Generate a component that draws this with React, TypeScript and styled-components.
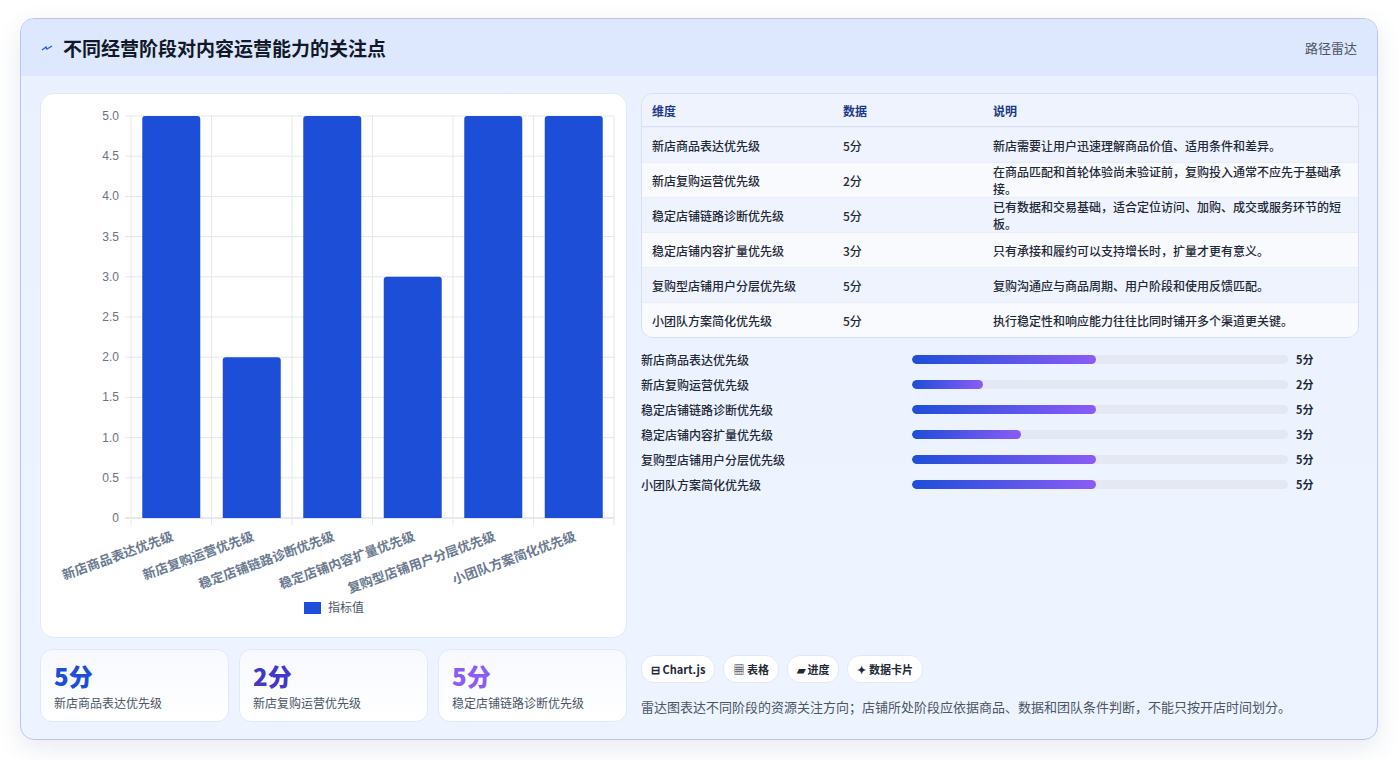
import React from 'react';
import styled, { createGlobalStyle } from 'styled-components';

const GlobalStyle = createGlobalStyle`
  body { margin: 0; background: #ffffff; font-family: "Noto Sans CJK SC", "Noto Sans", sans-serif; }
`;

const rows = [
    { name: '新店商品表达优先级', value: 5, note: '新店需要让用户迅速理解商品价值、适用条件和差异。' },
    { name: '新店复购运营优先级', value: 2, note: '在商品匹配和首轮体验尚未验证前，复购投入通常不应先于基础承接。' },
    { name: '稳定店铺链路诊断优先级', value: 5, note: '已有数据和交易基础，适合定位访问、加购、成交或服务环节的短板。' },
    { name: '稳定店铺内容扩量优先级', value: 3, note: '只有承接和履约可以支持增长时，扩量才更有意义。' },
    { name: '复购型店铺用户分层优先级', value: 5, note: '复购沟通应与商品周期、用户阶段和使用反馈匹配。' },
    { name: '小团队方案简化优先级', value: 5, note: '执行稳定性和响应能力往往比同时铺开多个渠道更关键。' },
];

const Page = styled.div`
    padding: 18px 20px 20px 20px;
`;

const Frame = styled.div`
    width: 1358px;
    height: 722px;
    box-sizing: border-box;
    border: 1px solid #b9c6ea;
    border-radius: 14px;
    background: linear-gradient(180deg, #eaf0fe 0%, #eef4ff 100%);
    box-shadow: 0 8px 24px rgba(60, 80, 140, 0.12);
    overflow: hidden;
    display: flex;
    flex-direction: column;
`;

const Header = styled.div`
    height: 57px;
    flex: none;
    background: #dde7fd;
    display: flex;
    align-items: center;
    justify-content: space-between;
    padding: 0 20px;
`;

const Title = styled.h1`
    margin: 0;
    font-size: 19px;
    font-weight: 700;
    color: #111827;
    display: flex;
    align-items: center;
    gap: 10px;
`;

const Tag = styled.span`
    font-size: 13px;
    color: #4b5563;
`;

const Body = styled.div`
    flex: 1;
    display: grid;
    grid-template-columns: 587px 1fr;
    gap: 14px;
    padding: 17px 18px 18px 19px;
`;

const Left = styled.div`
    display: flex;
    flex-direction: column;
    gap: 11px;
`;

const ChartCard = styled.div`
    height: 543px;
    background: #fff;
    border: 1px solid #e2e8f5;
    border-radius: 14px;
`;

const Stats = styled.div`
    display: grid;
    grid-template-columns: repeat(3, 1fr);
    gap: 10px;
`;

const Stat = styled.div`
    height: 73px;
    box-sizing: border-box;
    border: 1px solid #e2e8f5;
    border-radius: 12px;
    background: linear-gradient(180deg, #f7f9ff, #ffffff);
    padding: 10px 13px;
`;

const StatValue = styled.div<{ $c: string }>`
    font-size: 24px;
    font-weight: 800;
    color: ${p => p.$c};
    line-height: 32px;
`;

const StatLabel = styled.div`
    font-size: 12px;
    color: #4b5563;
    margin-top: 2px;
`;

const Right = styled.div`
    display: flex;
    flex-direction: column;
`;

const Table = styled.table`
    width: 100%;
    border-collapse: separate;
    border-spacing: 0;
    border: 1px solid #d7dff0;
    border-radius: 12px;
    overflow: hidden;
    font-size: 12px;
    color: #1f2937;
`;

const Th = styled.th<{ $w?: number }>`
    text-align: left;
    font-weight: 600;
    color: #1e3a8a;
    background: #eef3fe;
    height: 32px;
    padding: 0 10px;
    border-bottom: 1px solid #d7dff0;
    width: ${p => (p.$w ? `${p.$w}px` : 'auto')};
`;

const Td = styled.td<{ $alt: boolean }>`
    height: 34px;
    padding: 0 10px;
    font-weight: 500;
    background: ${p => (p.$alt ? '#f8fafd' : '#eef3fe')};
    border-top: 1px solid #e8edf7;
`;

const Bars = styled.div`
    margin-top: 12px;
    display: flex;
    flex-direction: column;
    gap: 7px;
`;

const BarRow = styled.div`
    display: grid;
    grid-template-columns: 271px 376px 1fr;
    align-items: center;
    gap: 0;
    height: 18px;
    font-size: 12px;
    font-weight: 500;
    color: #1f2937;
`;

const Track = styled.div`
    height: 9px;
    border-radius: 5px;
    background: #e3e8f2;
    overflow: hidden;
`;

const Fill = styled.div`
    height: 100%;
    border-radius: 5px;
    background: linear-gradient(90deg, #1d4ed8, #8b5cf6);
`;

const BarValue = styled.span`
    padding-left: 8px;
    font-weight: 700;
    font-size: 11px;
`;

const Spacer = styled.div`
    flex: 1;
`;

const Chips = styled.div`
    display: flex;
    gap: 8px;
`;

const Chip = styled.span`
    height: 26px;
    padding: 0 9px;
    display: inline-flex;
    align-items: center;
    gap: 3px;
    background: #fff;
    border: 1px solid #e2e8f5;
    border-radius: 13px;
    font-size: 11px;
    font-weight: 600;
    color: #1f2937;
`;

const Note = styled.p`
    margin: 14px 0 6px;
    font-size: 13px;
    color: #4b5563;
`;

function BarChart() {
    const x0 = 90, x1 = 573, y0 = 22, y1 = 424;
    const cw = (x1 - x0) / rows.length;
    const ticks = [0, 0.5, 1, 1.5, 2, 2.5, 3, 3.5, 4, 4.5, 5];
    const yOf = (v: number) => y1 - (v / 5) * (y1 - y0);
    return (
        <svg width="586" height="541" viewBox="0 0 586 541" fontFamily='"Liberation Sans", "Noto Sans CJK SC", sans-serif'>
            {ticks.map(t => (
                <g key={t}>
                    <line x1={x0 - 6} x2={x1} y1={yOf(t)} y2={yOf(t)} stroke={t === 0 ? '#cbd2dc' : '#e5e7eb'} />
                    <text x={x0 - 12} y={yOf(t) + 4} fontSize="12" fill="#6b7280" textAnchor="end">
                        {t === 0 ? '0' : t.toFixed(1)}
                    </text>
                </g>
            ))}
            {rows.map((_, i) => (
                <line key={i} x1={x0 + cw * i} x2={x0 + cw * i} y1={y0} y2={y1 + 7} stroke="#e5e7eb" />
            ))}
            <line x1={x1} x2={x1} y1={y0} y2={y1 + 7} stroke="#e5e7eb" />
            {rows.map((r, i) => {
                const cx = x0 + cw * i + cw / 2;
                const top = yOf(r.value);
                return (
                    <g key={r.name}>
                        <path
                            d={`M${cx - 29},${y1} V${top + 3} Q${cx - 29},${top} ${cx - 26},${top} H${cx + 26} Q${cx + 29},${top} ${cx + 29},${top + 3} V${y1} Z`}
                            fill="#1d4ed8"
                        />
                        <text
                            x={cx + 3}
                            y={y1 + 22}
                            fontSize="13"
                            fontWeight="700"
                            fill="#6b7a90"
                            textAnchor="end"
                            transform={`rotate(-20 ${cx + 3} ${y1 + 22})`}
                        >
                            {r.name}
                        </text>
                    </g>
                );
            })}
            <rect x="263" y="508" width="17" height="12" fill="#1d4ed8" />
            <text x="287" y="518" fontSize="12" fill="#4b5563">指标值</text>
        </svg>
    );
}

export default function App() {
    const colors = ['#1d4ed8', '#4338ca', '#8b5cf6'];
    return (
        <Page>
            <GlobalStyle />
            <Frame>
                <Header>
                    <Title>
                        <svg width="12" height="8" viewBox="0 0 12 8">
                            <path d="M1 6 L5 3 L6 5 L11 2" stroke="#2563eb" strokeWidth="1.4" fill="none" />
                        </svg>
                        不同经营阶段对内容运营能力的关注点
                    </Title>
                    <Tag>路径雷达</Tag>
                </Header>
                <Body>
                    <Left>
                        <ChartCard>
                            <BarChart />
                        </ChartCard>
                        <Stats>
                            {rows.slice(0, 3).map((r, i) => (
                                <Stat key={r.name}>
                                    <StatValue $c={colors[i]}>{r.value}分</StatValue>
                                    <StatLabel>{r.name}</StatLabel>
                                </Stat>
                            ))}
                        </Stats>
                    </Left>
                    <Right>
                        <Table>
                            <thead>
                                <tr>
                                    <Th $w={171}>维度</Th>
                                    <Th $w={130}>数据</Th>
                                    <Th>说明</Th>
                                </tr>
                            </thead>
                            <tbody>
                                {rows.map((r, i) => (
                                    <tr key={r.name}>
                                        <Td $alt={i % 2 === 1}>{r.name}</Td>
                                        <Td $alt={i % 2 === 1}>{r.value}分</Td>
                                        <Td $alt={i % 2 === 1}>{r.note}</Td>
                                    </tr>
                                ))}
                            </tbody>
                        </Table>
                        <Bars>
                            {rows.map(r => (
                                <BarRow key={r.name}>
                                    <span>{r.name}</span>
                                    <Track>
                                        <Fill style={{ width: `${r.value * 10 - 1}%` }} />
                                    </Track>
                                    <BarValue>{r.value}分</BarValue>
                                </BarRow>
                            ))}
                        </Bars>
                        <Spacer />
                        <Chips>
                            <Chip>⊟ Chart.js</Chip>
                            <Chip>▦ 表格</Chip>
                            <Chip>▰ 进度</Chip>
                            <Chip>✦ 数据卡片</Chip>
                        </Chips>
                        <Note>雷达图表达不同阶段的资源关注方向；店铺所处阶段应依据商品、数据和团队条件判断，不能只按开店时间划分。</Note>
                    </Right>
                </Body>
            </Frame>
        </Page>
    );
}
